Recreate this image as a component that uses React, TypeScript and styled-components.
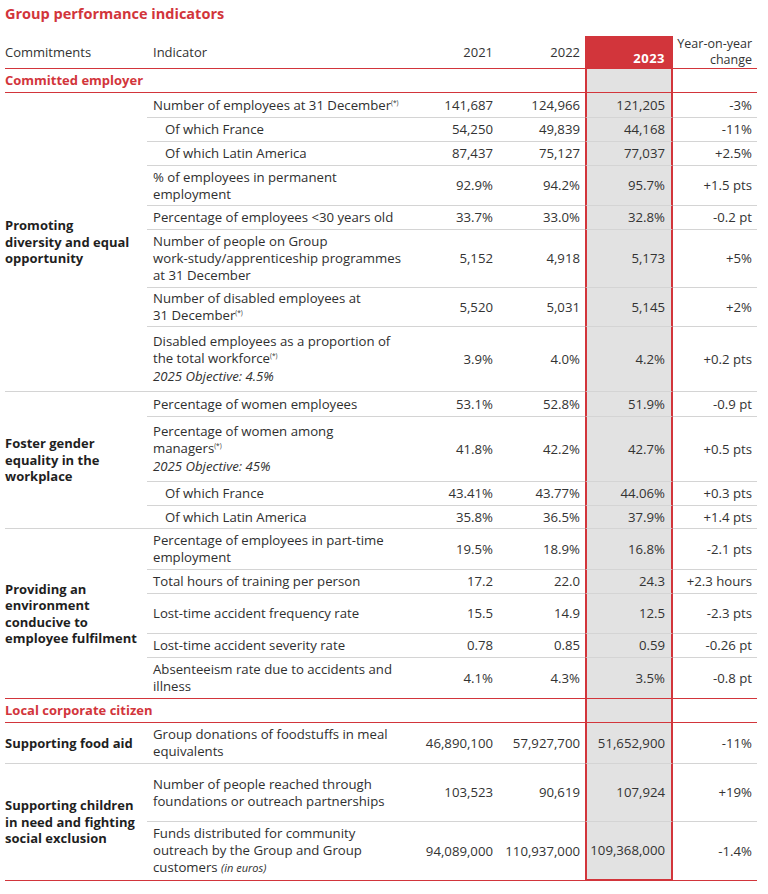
import React from 'react';
import styled, { createGlobalStyle, css } from 'styled-components';

const RED = '#d2353b';
const LINE = '#d4d4d4';
const HL = '#e2e2e2';
const FONT = '"Open Sans", "Noto Sans", sans-serif';

type Bottom = 'gray' | 'red' | 'none';

const Global = createGlobalStyle`
  html, body { margin: 0; padding: 0; background: #fff; }
  body { font-family: ${FONT}; color: #2f2f2f; }
`;

const Page = styled.div`
  padding: 4px 11px 12px 5px;
  width: 752px;
`;

const Title = styled.h1`
  margin: 0 0 12px;
  font-size: 14.5px;
  line-height: 20px;
  font-weight: 700;
  color: ${RED};
`;

const Table = styled.table`
  width: 752px;
  table-layout: fixed;
  border-collapse: separate;
  border-spacing: 0;
  font-size: 13.2px;
  line-height: 16.8px;
`;

const Row = styled.tr<{ $h: number }>`
  height: ${(p) => p.$h}px;
`;

const borderFor = (b: Bottom) =>
  b === 'red' ? `1px solid ${RED}` : b === 'gray' ? `1px solid ${LINE}` : 'none';

const Cell = styled.td<{ $b: Bottom }>`
  padding: 0;
  border-bottom: ${(p) => borderFor(p.$b)};
  vertical-align: middle;
`;

const CommitCell = styled(Cell)`
  font-weight: 700;
  font-size: 13px;
  color: #1f1f1f;
  white-space: nowrap;
  line-height: 16.5px;
`;

const IndCell = styled(Cell)<{ $indent?: boolean }>`
  padding: 0 4px 0 ${(p) => (p.$indent ? 18 : 6)}px;
  white-space: nowrap;
  color: #2f2f2f;
`;

const NumCell = styled(Cell)<{ $hl?: boolean; $thick?: boolean }>`
  text-align: right;
  padding-right: 5px;
  white-space: nowrap;
  color: #333;
  ${(p) =>
    p.$hl &&
    css`
      background: ${HL};
      border-left: 2px solid ${RED};
      border-right: 2px solid ${RED};
      padding-right: 6px;
    `}
  ${(p) =>
    p.$thick &&
    css`
      border-bottom: 2px solid ${RED};
    `}
`;

const SectionCell = styled(Cell)`
  color: ${RED};
  font-weight: 700;
  font-size: 13px;
`;

const HeadCell = styled.th<{ $align?: 'left' | 'right'; $pl?: number }>`
  font-weight: 400;
  font-size: 13px;
  text-align: ${(p) => p.$align || 'left'};
  padding: 0 5px 0 ${(p) => p.$pl || 0}px;
  vertical-align: middle;
  border-bottom: 1px solid ${RED};
  color: #333;
`;

const HeadYear = styled.th`
  background: ${RED};
  color: #fff;
  font-weight: 700;
  font-size: 13px;
  text-align: right;
  vertical-align: bottom;
  padding: 0 6px 1px 0;
  border: 2px solid ${RED};
  border-bottom: 1px solid ${RED};
  letter-spacing: 0.5px;
`;

const HeadChange = styled.th`
  font-weight: 400;
  font-size: 12.5px;
  text-align: right;
  vertical-align: bottom;
  padding: 0 5px 0 0;
  line-height: 16px;
  border-bottom: 1px solid ${RED};
  color: #333;
`;

const Sup = styled.sup`
  font-size: 6.5px;
  line-height: 0;
  vertical-align: 5px;
`;

const Objective = styled.div`
  font-style: italic;
  margin-top: 1px;
`;

const Small = styled.span`
  font-style: italic;
  font-size: 11px;
`;

type RowData = {
  ind: React.ReactNode;
  indent?: boolean;
  objective?: string;
  v: [string, string, string, string];
  h: number;
};

type Group = { title: React.ReactNode; rows: RowData[] };
type Section = { name: string; h: number; groups: Group[] };

const star = <Sup>(*)</Sup>;

const sections: Section[] = [
  {
    name: 'Committed employer',
    h: 24,
    groups: [
      {
        title: (
          <>
            Promoting
            <br />
            diversity and equal
            <br />
            opportunity
          </>
        ),
        rows: [
          { ind: <>Number of employees at 31 December{star}</>, v: ['141,687', '124,966', '121,205', '-3%'], h: 25 },
          { ind: 'Of which France', indent: true, v: ['54,250', '49,839', '44,168', '-11%'], h: 24 },
          { ind: 'Of which Latin America', indent: true, v: ['87,437', '75,127', '77,037', '+2.5%'], h: 24 },
          { ind: <>% of employees in permanent<br />employment</>, v: ['92.9%', '94.2%', '95.7%', '+1.5 pts'], h: 40 },
          { ind: 'Percentage of employees <30 years old', v: ['33.7%', '33.0%', '32.8%', '-0.2 pt'], h: 24 },
          {
            ind: <>Number of people on Group<br />work-study/apprenticeship programmes<br />at 31 December</>,
            v: ['5,152', '4,918', '5,173', '+5%'],
            h: 58,
          },
          { ind: <>Number of disabled employees at<br />31 December{star}</>, v: ['5,520', '5,031', '5,145', '+2%'], h: 39 },
          {
            ind: <>Disabled employees as a proportion of<br />the total workforce{star}</>,
            objective: '2025 Objective: 4.5%',
            v: ['3.9%', '4.0%', '4.2%', '+0.2 pts'],
            h: 65,
          },
        ],
      },
      {
        title: (
          <>
            Foster gender
            <br />
            equality in the
            <br />
            workplace
          </>
        ),
        rows: [
          { ind: 'Percentage of women employees', v: ['53.1%', '52.8%', '51.9%', '-0.9 pt'], h: 25 },
          {
            ind: <>Percentage of women among<br />managers{star}</>,
            objective: '2025 Objective: 45%',
            v: ['41.8%', '42.2%', '42.7%', '+0.5 pts'],
            h: 65,
          },
          { ind: 'Of which France', indent: true, v: ['43.41%', '43.77%', '44.06%', '+0.3 pts'], h: 24 },
          { ind: 'Of which Latin America', indent: true, v: ['35.8%', '36.5%', '37.9%', '+1.4 pts'], h: 23 },
        ],
      },
      {
        title: (
          <>
            Providing an
            <br />
            environment
            <br />
            conducive to
            <br />
            employee fulfilment
          </>
        ),
        rows: [
          { ind: <>Percentage of employees in part-time<br />employment</>, v: ['19.5%', '18.9%', '16.8%', '-2.1 pts'], h: 41 },
          { ind: 'Total hours of training per person', v: ['17.2', '22.0', '24.3', '+2.3 hours'], h: 24 },
          { ind: 'Lost-time accident frequency rate', v: ['15.5', '14.9', '12.5', '-2.3 pts'], h: 40 },
          { ind: 'Lost-time accident severity rate', v: ['0.78', '0.85', '0.59', '-0.26 pt'], h: 24 },
          { ind: <>Absenteeism rate due to accidents and<br />illness</>, v: ['4.1%', '4.3%', '3.5%', '-0.8 pt'], h: 41 },
        ],
      },
    ],
  },
  {
    name: 'Local corporate citizen',
    h: 24,
    groups: [
      {
        title: 'Supporting food aid',
        rows: [
          {
            ind: <>Group donations of foodstuffs in meal<br />equivalents</>,
            v: ['46,890,100', '57,927,700', '51,652,900', '-11%'],
            h: 41,
          },
        ],
      },
      {
        title: (
          <>
            Supporting children
            <br />
            in need and fighting
            <br />
            social exclusion
          </>
        ),
        rows: [
          {
            ind: <>Number of people reached through<br />foundations or outreach partnerships</>,
            v: ['103,523', '90,619', '107,924', '+19%'],
            h: 58,
          },
          {
            ind: (
              <>
                Funds distributed for community<br />outreach by the Group and Group<br />customers <Small>(in euros)</Small>
              </>
            ),
            v: ['94,089,000', '110,937,000', '109,368,000', '-1.4%'],
            h: 59,
          },
        ],
      },
    ],
  },
];

export default function App() {
  const rows: React.ReactNode[] = [];
  sections.forEach((sec, si) => {
    rows.push(
      <Row key={`s${si}`} $h={sec.h}>
        <SectionCell $b="red" colSpan={4}>
          {sec.name}
        </SectionCell>
        <NumCell $b="red" $hl />
        <NumCell $b="red" />
      </Row>
    );
    sec.groups.forEach((g, gi) => {
      const lastGroupInSection = gi === sec.groups.length - 1;
      const lastOfTable = si === sections.length - 1 && lastGroupInSection;
      const groupBottom: Bottom = lastGroupInSection ? 'red' : 'gray';
      g.rows.forEach((r, ri) => {
        const isLast = ri === g.rows.length - 1;
        const b: Bottom = isLast ? groupBottom : 'gray';
        rows.push(
          <Row key={`r${si}-${gi}-${ri}`} $h={r.h}>
            {ri === 0 && (
              <CommitCell $b={groupBottom} rowSpan={g.rows.length}>
                {g.title}
              </CommitCell>
            )}
            <IndCell $b={b} $indent={r.indent}>
              {r.ind}
              {r.objective && <Objective>{r.objective}</Objective>}
            </IndCell>
            <NumCell $b={b}>{r.v[0]}</NumCell>
            <NumCell $b={b}>{r.v[1]}</NumCell>
            <NumCell $b={b} $hl $thick={lastOfTable && isLast}>
              {r.v[2]}
            </NumCell>
            <NumCell $b={b}>{r.v[3]}</NumCell>
          </Row>
        );
      });
    });
  });

  return (
    <Page>
      <Global />
      <Title>Group performance indicators</Title>
      <Table>
        <colgroup>
          <col style={{ width: 142 }} />
          <col style={{ width: 268 }} />
          <col style={{ width: 83 }} />
          <col style={{ width: 87 }} />
          <col style={{ width: 88 }} />
          <col style={{ width: 84 }} />
        </colgroup>
        <thead>
          <Row $h={32}>
            <HeadCell>Commitments</HeadCell>
            <HeadCell $pl={6}>Indicator</HeadCell>
            <HeadCell $align="right">2021</HeadCell>
            <HeadCell $align="right">2022</HeadCell>
            <HeadYear>2023</HeadYear>
            <HeadChange>
              Year-on-year
              <br />
              change
            </HeadChange>
          </Row>
        </thead>
        <tbody>{rows}</tbody>
      </Table>
    </Page>
  );
}
